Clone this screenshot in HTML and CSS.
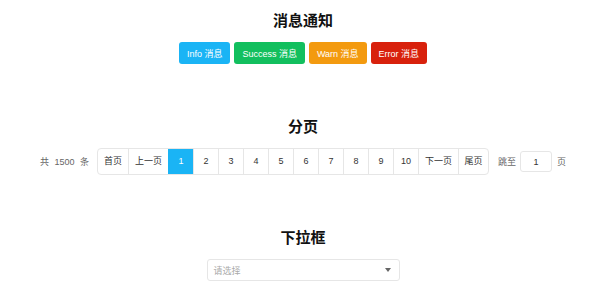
FILE: index.html
```html
<!DOCTYPE html>
<html>
<head>
  <title>组件示例</title>
  <meta charset="UTF-8">
  <meta name="viewport" content="width=device-width, initial-scale=1.0">
  <link rel="stylesheet" href="styles.css">
</head>
<body>
  <div class="page">
    <section class="block block-notice">
      <h2>消息通知</h2>
      <div class="btn-row">
        <button class="btn btn-info">Info 消息</button>
        <button class="btn btn-success">Success 消息</button>
        <button class="btn btn-warn">Warn 消息</button>
        <button class="btn btn-error">Error 消息</button>
      </div>
    </section>

    <section class="block block-pager">
      <h2>分页</h2>
      <div class="pager">
        <span class="total">共 1500 条</span>
        <ul class="pages">
          <li class="wide">首页</li>
          <li class="wider">上一页</li>
          <li class="active">1</li>
          <li>2</li>
          <li>3</li>
          <li>4</li>
          <li>5</li>
          <li>6</li>
          <li>7</li>
          <li>8</li>
          <li>9</li>
          <li>10</li>
          <li class="wider">下一页</li>
          <li class="wide">尾页</li>
        </ul>
        <div class="jump">
          <span>跳至</span>
          <input type="text" value="1">
          <span>页</span>
        </div>
      </div>
    </section>

    <section class="block">
      <h2>下拉框</h2>
      <div class="select">
        <span class="placeholder">请选择</span>
        <span class="caret"></span>
      </div>
    </section>
  </div>
</body>
</html>
```

FILE: styles.css
```css
body {
  margin: 0;
  font-family: "Liberation Sans", Arial, "Noto Sans CJK SC", sans-serif;
  font-size: 9px;
  color: #333;
  background: #fff;
}
.page {
  padding: 12px 0 0 16px;
}
.block {
  display: flex;
  flex-direction: column;
  align-items: center;
}
.block-notice { margin-bottom: 54px; }
.block-pager { margin-bottom: 54px; }
h2 {
  margin: 0 0 12px;
  font-size: 15px;
  line-height: 18px;
  font-weight: bold;
  color: #111;
}
.btn-row {
  display: flex;
  gap: 4px;
}
.btn {
  height: 22px;
  padding: 0 8px;
  border: none;
  border-radius: 3px;
  color: #fff;
  font-family: inherit;
  font-size: 9px;
}
.btn-info { background: #1ab4f5; }
.btn-success { background: #12bf5e; }
.btn-warn { background: #f39a0f; }
.btn-error { background: #d8210c; }

.pager {
  display: flex;
  align-items: center;
  color: #666;
}
.total {
  margin-right: 8px;
  word-spacing: 3px;
}
.pages {
  display: flex;
  margin: 0;
  padding: 0;
  list-style: none;
  border: 1px solid #e6e6e6;
  border-radius: 4px;
  overflow: hidden;
}
.pages li {
  box-sizing: border-box;
  width: 25px;
  height: 25px;
  line-height: 25px;
  text-align: center;
  color: #333;
  border-left: 1px solid #e6e6e6;
}
.pages li:first-child { border-left: none; }
.pages li.wide { width: 30px; }
.pages li.wider { width: 40px; }
.pages li.active {
  background: #1ab4f5;
  color: #fff;
  border-left-color: #1ab4f5;
}
.jump {
  display: flex;
  align-items: center;
  gap: 4px;
  margin-left: 9px;
}
.jump input {
  width: 32px;
  height: 21px;
  box-sizing: border-box;
  margin: 0 1px 0 0;
  border: 1px solid #e6e6e6;
  border-radius: 3px;
  text-align: center;
  font-family: inherit;
  font-size: 9px;
  color: #333;
}
.select {
  display: flex;
  justify-content: space-between;
  align-items: center;
  width: 193px;
  height: 22px;
  box-sizing: border-box;
  padding: 0 8px 0 6px;
  border: 1px solid #e6e6e6;
  border-radius: 3px;
}
.placeholder {
  color: #aaa;
}
.caret {
  width: 0;
  height: 0;
  border-left: 3px solid transparent;
  border-right: 3px solid transparent;
  border-top: 4px solid #666;
}
```
